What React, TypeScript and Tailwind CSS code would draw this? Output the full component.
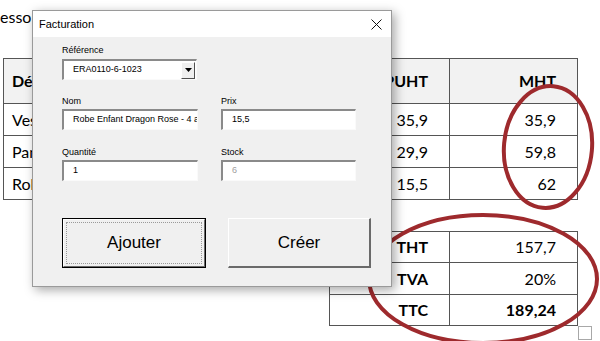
import React from 'react'

const rows = [
  { d: 'Veste Enfant Dragon Bleu - 6 ans', q: '1', pu: '35,9', m: '35,9' },
  { d: 'Pantalon Enfant Dragon Rose - 4 ans', q: '2', pu: '29,9', m: '59,8' },
  { d: 'Robe Enfant Dragon Rose - 4 ans', q: '4', pu: '15,5', m: '62' },
]

const totals = [
  { label: 'THT', value: '157,7', bold: false },
  { label: 'TVA', value: '20%', bold: false },
  { label: 'TTC', value: '189,24', bold: true },
]

function Field({ label, value, width, muted, labelGap }: { label: string; value: string; width: string; muted?: boolean; labelGap: string }) {
  return (
    <div className={`flex flex-col ${width}`}>
      <span className={`h-[11px] text-[9px] leading-[11px] ${labelGap}`}>{label}</span>
      <div className="h-[21px] border-t-2 border-l-2 border-t-[#8a8a8a] border-l-[#8a8a8a] border-r border-b border-r-[#fafafa] border-b-[#fafafa] bg-white flex items-center pl-[9px] overflow-hidden whitespace-nowrap">
        <span className={`text-[9px] ${muted ? 'text-[#a0a0a0]' : 'text-black'}`}>{value}</span>
      </div>
    </div>
  )
}

export default function App() {
  return (
    <div className="relative w-[600px] h-[341px] overflow-hidden bg-white text-black" style={{ fontFamily: 'Lato, "Liberation Sans", sans-serif' }}>
      {/* document behind the dialog */}
      <div className="flex flex-col">
        <p className="pt-[7px] text-[16px] leading-[20px]">esso</p>

        <div className="ml-[3px] mt-[31px] w-[575px] border-l border-t border-[#555] text-[16px]">
          <div className="flex h-[45px] border-b border-[#555] bg-[#f2f2f2] font-bold">
            <div className="w-[247px] border-r border-[#555] flex items-center pl-[8px]">Désignation</div>
            <div className="w-[90px] border-r border-[#555] flex items-center justify-center">Qté</div>
            <div className="w-[109px] border-r border-[#555] flex items-center justify-end pr-[21px]">PUHT</div>
            <div className="w-[128px] border-r border-[#555] flex items-center justify-end pr-[21px]">MHT</div>
          </div>
          {rows.map((r) => (
            <div key={r.d} className="flex h-[32px] border-b border-[#555]">
              <div className="w-[247px] border-r border-[#555] flex items-center pl-[8px] whitespace-nowrap overflow-hidden">{r.d}</div>
              <div className="w-[90px] border-r border-[#555] flex items-center justify-center">{r.q}</div>
              <div className="w-[109px] border-r border-[#555] flex items-center justify-end pr-[21px]">{r.pu}</div>
              <div className="w-[128px] border-r border-[#555] flex items-center justify-end pr-[21px]">{r.m}</div>
            </div>
          ))}
        </div>

        <div className="ml-[329px] mt-[31px] w-[249px] border-l border-t border-[#555] text-[16px]">
          {totals.map((t, i) => (
            <div key={t.label} className={`flex ${i === 1 ? 'h-[32px]' : 'h-[31px]'} border-b border-[#555]`}>
              <div className="w-[120px] border-r border-[#555] flex items-center justify-end pr-[21px] font-bold">{t.label}</div>
              <div className={`w-[128px] border-r border-[#555] flex items-center justify-end pr-[21px] ${t.bold ? 'font-bold' : ''}`}>{t.value}</div>
            </div>
          ))}
        </div>
      </div>

      {/* small handle at the bottom right */}
      <div className="absolute left-[578px] top-[326px] w-[14px] h-[14px] border border-[#a8a8a8] bg-white" />

      {/* red annotations */}
      <svg className="absolute inset-0 pointer-events-none" width="600" height="341" viewBox="0 0 600 341">
        <ellipse cx="548" cy="147" rx="44" ry="61" transform="rotate(5 548 147)" fill="none" stroke="#9e2a2d" strokeWidth="4" />
        <ellipse cx="483" cy="279" rx="114" ry="64" fill="none" stroke="#9e2a2d" strokeWidth="4" />
      </svg>

      {/* Facturation dialog */}
      <div
        className="absolute left-[32px] top-[10px] w-[360px] h-[277px] border border-[#9a9a9a] bg-[#f0f0f0] shadow-[3px_3px_10px_rgba(0,0,0,0.35)] flex flex-col"
        style={{ fontFamily: '"Liberation Sans", Arial, sans-serif' }}
      >
        <div className="h-[26px] bg-white flex items-center justify-between pl-[6px] pr-[9px]">
          <span className="text-[11px]">Facturation</span>
          <svg width="11" height="11" viewBox="0 0 11 11">
            <path d="M0.5 0.5 L10.5 10.5 M10.5 0.5 L0.5 10.5" stroke="#111" strokeWidth="1" />
          </svg>
        </div>

        <div className="flex flex-col pl-[29px] pt-[8px]">
          <div className="flex flex-col w-[135px]">
            <span className="h-[11px] text-[9px] leading-[11px] mb-[3px]">Référence</span>
            <div className="h-[21px] border-t-2 border-l-2 border-t-[#8a8a8a] border-l-[#8a8a8a] border-r border-b border-r-[#fafafa] border-b-[#fafafa] bg-white flex items-center justify-between pl-[9px] pr-[1px]">
              <span className="text-[9px]">ERA0110-6-1023</span>
              <div className="w-[14px] h-[17px] bg-[#f0f0f0] border-t border-l border-t-white border-l-white border-r border-b border-r-[#505050] border-b-[#505050] flex items-center justify-center">
                <svg width="7" height="4" viewBox="0 0 7 4">
                  <path d="M0 0 H7 L3.5 4 Z" fill="#000" />
                </svg>
              </div>
            </div>
          </div>

          <div className="flex gap-[23px] mt-[16px]">
            <Field label="Nom" value="Robe Enfant Dragon Rose - 4 ans" width="w-[136px]" labelGap="mb-[2px]" />
            <Field label="Prix" value="15,5" width="w-[135px]" labelGap="mb-[2px]" />
          </div>

          <div className="flex gap-[23px] mt-[17px]">
            <Field label="Quantité" value="1" width="w-[136px]" labelGap="mb-[2px]" />
            <Field label="Stock" value="6" width="w-[135px]" muted labelGap="mb-[2px]" />
          </div>

          <div className="flex gap-[22px] mt-[37px]">
            <button className="relative w-[144px] h-[50px] border border-black bg-[#f0f0f0] text-[17px]">
              <div className="absolute inset-0 border-r border-b border-r-[#6a6a6a] border-b-[#6a6a6a] border-t border-l border-t-white border-l-white" />
              <div className="absolute inset-[3px] border border-dotted border-[#9a9a9a]" />
              <span className="relative">Ajouter</span>
            </button>
            <button className="w-[143px] h-[50px] bg-[#f0f0f0] border-t border-l border-t-white border-l-white border-r-2 border-b-2 border-r-[#6a6a6a] border-b-[#6a6a6a] text-[17px]">
              Créer
            </button>
          </div>
        </div>
      </div>
    </div>
  )
}
